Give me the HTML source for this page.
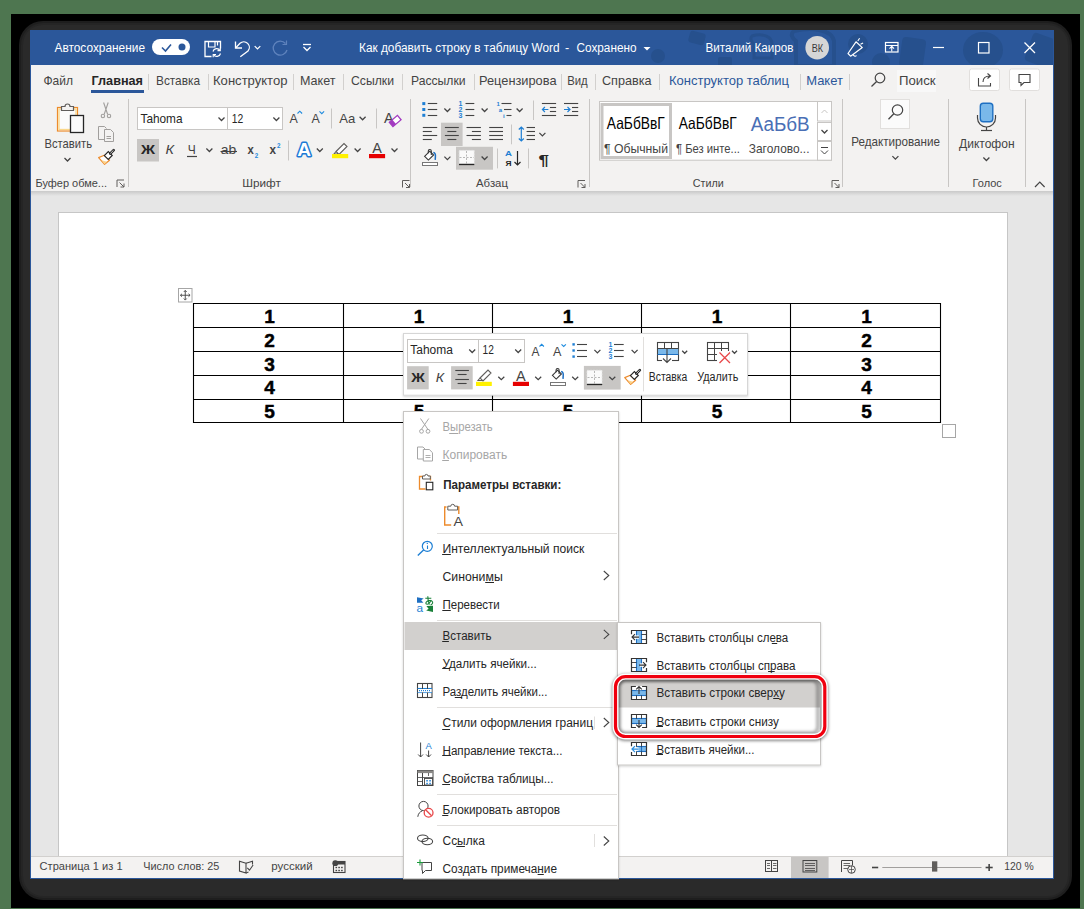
<!DOCTYPE html>
<html><head><meta charset="utf-8"><style>
html,body{margin:0;padding:0;width:1084px;height:909px;overflow:hidden;background:#4e7650}
svg{display:block;font-family:"Liberation Sans",sans-serif}
</style></head><body>
<svg width="1084" height="909" viewBox="0 0 1084 909">
<rect x="0" y="0" width="1084" height="909" fill="#4e7650" />
<rect x="11" y="14" width="1069" height="894" fill="#000" />
<rect x="19" y="21" width="1053" height="879" fill="#1e1e1e" rx="24" />
<rect x="21" y="23" width="1049" height="875" fill="#252525" rx="22" />
<rect x="23" y="25" width="1045" height="871" fill="#2a2a2a" rx="20" />
<rect x="30" y="30" width="1024" height="849" fill="#2b579a" />
<rect x="31" y="65" width="1022" height="813" fill="#f3f2f1" />
<defs><clipPath id="tbc"><rect x="31" y="30" width="1022" height="35"/></clipPath></defs><g clip-path="url(#tbc)"><g fill="#26508d">
<circle cx="658" cy="56" r="7"/>
<rect x="689" y="32" width="16" height="12" rx="3" transform="rotate(15 697 38)"/>
<rect x="718" y="57" width="14" height="12" rx="2"/>
<circle cx="858" cy="44" r="10"/>
<circle cx="881" cy="62" r="9"/>
<rect x="901" y="38" width="24" height="30" rx="4" transform="rotate(8 913 50)"/>
<ellipse cx="983" cy="50" rx="20" ry="18"/>
<rect x="1028" y="36" width="30" height="30" rx="4" transform="rotate(20 1043 51)"/>
</g>
<path d="M752 36c10-3 20 0 20 8v14h-18v-14c-3-2-4-6-2-8z" fill="none" stroke="#26508d" stroke-width="3"/>
<path d="M794 31c16-4 38-2 40 10v25h-38v-25c-4-3-6-7-2-10z" fill="none" stroke="#26508d" stroke-width="4"/></g>
<text x="54.5" y="51.8" font-size="12.5" fill="#fff" textLength="90.5" lengthAdjust="spacingAndGlyphs" >Автосохранение</text>
<rect x="152" y="39" width="38" height="16" fill="#fff" rx="8" />
<path d="M162 47.5L165.5 51L171 44.5" fill="none" stroke="#2b579a" stroke-width="1.6" />
<circle cx="182" cy="47" r="3.5" fill="#2b579a"/>
<path d="M211.5 56.5h-6.5v-15h15.5v7" fill="none" stroke="#fff" stroke-width="1.3" />
<path d="M208.5 41.5v5.5h6.5v-5.5M217.5 41.5v4" fill="none" stroke="#fff" stroke-width="1.2" />
<path d="M213 51.5a3.8 3.8 0 0 1 7-1M220.5 53.5a3.8 3.8 0 0 1-7 1" fill="none" stroke="#fff" stroke-width="1.2" />
<path d="M220.3 47.8v2.8h-2.8M213.2 57.3v-2.8h2.8" fill="none" stroke="#fff" stroke-width="1.1" />
<path d="M235.5 41.5v6.5h6.5" fill="none" stroke="#fff" stroke-width="1.3" />
<path d="M235.8 47.7L240 43.2a5.6 5.6 0 0 1 8 7.8L240.3 56.8" fill="none" stroke="#fff" stroke-width="1.3" />
<path d="M254.7 46.1L257.5 48.9L260.3 46.1" fill="none" stroke="#fff" stroke-width="1.25" />
<path d="M285.5 43.5A7 7 0 1 0 287 50" fill="none" stroke="#5f83bd" stroke-width="1.3"/>
<path d="M286.5 40.5v4h-4" fill="none" stroke="#5f83bd" stroke-width="1.2" />
<line x1="303" y1="44.5" x2="311" y2="44.5" stroke="#fff" stroke-width="1.3" />
<path d="M303.5 47l3.5 3.5 3.5-3.5" fill="none" stroke="#fff" stroke-width="1.3" />
<text x="359" y="52" font-size="12.5" fill="#fff" textLength="200.5" lengthAdjust="spacingAndGlyphs" >Как добавить строку в таблицу Word</text>
<text x="565" y="52" font-size="12.5" fill="#fff" >-</text>
<text x="576.5" y="52" font-size="12.5" fill="#fff" textLength="60" lengthAdjust="spacingAndGlyphs" >Сохранено</text>
<path d="M643.5 47h7l-3.5 3.5z" fill="#fff" />
<text x="705.5" y="52" font-size="12.5" fill="#fff" textLength="88" lengthAdjust="spacingAndGlyphs" >Виталий Каиров</text>
<circle cx="817.2" cy="47.7" r="11.8" fill="#d6d6d6"/>
<text x="817.4" y="51.8" font-size="11" fill="#3a3a3a" textLength="11.4" lengthAdjust="spacingAndGlyphs" text-anchor="middle" >ВК</text>
<path d="M848 53.5L856 41.8L862.3 47.6L850.6 56.2Z" fill="none" stroke="#fff" stroke-width="1.2" stroke-linejoin="round"/>
<path d="M853.3 54.3a1.8 1.8 0 0 0 3.2 1.2" fill="none" stroke="#fff" stroke-width="1.1" />
<path d="M857.8 41l1.8-2.8M860.5 44.3l2.6-1.3" fill="none" stroke="#fff" stroke-width="1.1" />
<rect x="885.5" y="42.5" width="12.5" height="9.5" fill="none" stroke="#fff" stroke-width="1.2" />
<line x1="885.5" y1="45.5" x2="898" y2="45.5" stroke="#fff" stroke-width="1" />
<path d="M891.75 51.5v-5M889.5 48.7l2.25-2.3 2.25 2.3" fill="none" stroke="#fff" stroke-width="1.1" />
<line x1="933" y1="47.5" x2="944" y2="47.5" stroke="#fff" stroke-width="1.2" />
<rect x="978.5" y="42.5" width="10.5" height="10.5" fill="none" stroke="#fff" stroke-width="1.2" />
<path d="M1024.5 42.5l10.5 10.5M1035 42.5l-10.5 10.5" fill="none" stroke="#fff" stroke-width="1.3" />
<text x="43.5" y="85" font-size="12.8" fill="#444" textLength="29.5" lengthAdjust="spacingAndGlyphs" >Файл</text>
<text x="91.5" y="85" font-size="12.8" fill="#262626" font-weight="bold" textLength="51.5" lengthAdjust="spacingAndGlyphs" >Главная</text>
<text x="156" y="85" font-size="12.8" fill="#444" textLength="44" lengthAdjust="spacingAndGlyphs" >Вставка</text>
<text x="213" y="85" font-size="12.8" fill="#444" textLength="74.5" lengthAdjust="spacingAndGlyphs" >Конструктор</text>
<text x="300" y="85" font-size="12.8" fill="#444" textLength="35.5" lengthAdjust="spacingAndGlyphs" >Макет</text>
<text x="351" y="85" font-size="12.8" fill="#444" textLength="43" lengthAdjust="spacingAndGlyphs" >Ссылки</text>
<text x="411" y="85" font-size="12.8" fill="#444" textLength="54.5" lengthAdjust="spacingAndGlyphs" >Рассылки</text>
<text x="479" y="85" font-size="12.8" fill="#444" textLength="77.5" lengthAdjust="spacingAndGlyphs" >Рецензирова</text>
<text x="567.2" y="85" font-size="12.8" fill="#444" textLength="20.5" lengthAdjust="spacingAndGlyphs" >Вид</text>
<text x="602" y="85" font-size="12.8" fill="#444" textLength="49.5" lengthAdjust="spacingAndGlyphs" >Справка</text>
<text x="669" y="85" font-size="12.8" fill="#2b579a" textLength="120" lengthAdjust="spacingAndGlyphs" >Конструктор таблиц</text>
<text x="806.2" y="85" font-size="12.8" fill="#2b579a" textLength="36.7" lengthAdjust="spacingAndGlyphs" >Макет</text>
<line x1="148.5" y1="74" x2="148.5" y2="90" stroke="#d2d0ce" stroke-width="1" />
<line x1="208.5" y1="74" x2="208.5" y2="90" stroke="#d2d0ce" stroke-width="1" />
<line x1="293.5" y1="74" x2="293.5" y2="90" stroke="#d2d0ce" stroke-width="1" />
<line x1="343.5" y1="74" x2="343.5" y2="90" stroke="#d2d0ce" stroke-width="1" />
<line x1="402.5" y1="74" x2="402.5" y2="90" stroke="#d2d0ce" stroke-width="1" />
<line x1="474.5" y1="74" x2="474.5" y2="90" stroke="#d2d0ce" stroke-width="1" />
<line x1="561.5" y1="74" x2="561.5" y2="90" stroke="#d2d0ce" stroke-width="1" />
<line x1="595.5" y1="74" x2="595.5" y2="90" stroke="#d2d0ce" stroke-width="1" />
<line x1="659.5" y1="74" x2="659.5" y2="90" stroke="#d2d0ce" stroke-width="1" />
<line x1="800.5" y1="74" x2="800.5" y2="90" stroke="#d2d0ce" stroke-width="1" />
<line x1="849.5" y1="74" x2="849.5" y2="90" stroke="#d2d0ce" stroke-width="1" />
<rect x="91" y="90" width="53" height="3" fill="#2b579a" />
<circle cx="880" cy="78" r="4.8" fill="none" stroke="#444" stroke-width="1.2"/>
<line x1="876.6" y1="81.5" x2="871.5" y2="86.5" stroke="#444" stroke-width="1.3" />
<rect x="897" y="70" width="39" height="22" fill="#f8f8f8" />
<text x="899" y="85" font-size="12.8" fill="#444" textLength="36.5" lengthAdjust="spacingAndGlyphs" >Поиск</text>
<rect x="969.5" y="69" width="30" height="21.5" fill="#fff" stroke="#e1dfdd" stroke-width="1" rx="2" />
<rect x="1009.5" y="69" width="30" height="21.5" fill="#fff" stroke="#e1dfdd" stroke-width="1" rx="2" />
<path d="M978.5 78v8h12v-3M983 82c0-4 3-6 7-6M987.5 73.5l3 2.5-3 2.5" fill="none" stroke="#444" stroke-width="1.1" />
<path d="M1019 74.5h11v8h-6l-3 3v-3h-2z" fill="none" stroke="#444" stroke-width="1.1" />
<rect x="31" y="191" width="1022" height="666" fill="#e6e6e6" />
<defs><linearGradient id="sh" x1="0" y1="0" x2="0" y2="1"><stop offset="0" stop-color="#c9c9c9"/><stop offset="1" stop-color="#e6e6e6"/></linearGradient></defs>
<rect x="31" y="191" width="1022" height="5" fill="url(#sh)" />
<rect x="58.5" y="212.5" width="949" height="660" fill="#fff" stroke="#c6c6c6" stroke-width="1" />
<rect x="31" y="856.5" width="1022" height="21.5" fill="#f3f2f1" />
<line x1="31" y1="856.5" x2="1053" y2="856.5" stroke="#d2d0ce" stroke-width="1" />
<rect x="57.5" y="107.5" width="20" height="23.5" fill="#fbfbfb" stroke="#ed8b2c" stroke-width="1.2" />
<rect x="59" y="109" width="17" height="20.5" fill="none" stroke="#fad78a" stroke-width="1.3" />
<path d="M61.5 110.5v-4h3.5a2.5 2.5 0 0 1 5 0h3.5v4z" fill="#f3f2f1" stroke="#605e5c" stroke-width="1.2" />
<rect x="70.5" y="115.5" width="13" height="17" fill="#fbfbfb" stroke="#262626" stroke-width="1.3" />
<text x="44.5" y="147.8" font-size="12.8" fill="#444" textLength="47.5" lengthAdjust="spacingAndGlyphs" >Вставить</text>
<path d="M64.5 158.0L67.5 161.0L70.5 158.0" fill="none" stroke="#444" stroke-width="1.25" />
<path d="M103.6 102.5L107.6 114.3M108.2 102.5L104.2 114.3" fill="none" stroke="#a19f9d" stroke-width="1.1" />
<circle cx="102.9" cy="116" r="1.7" fill="none" stroke="#a19f9d" stroke-width="1.1"/>
<circle cx="109" cy="116" r="1.7" fill="none" stroke="#a19f9d" stroke-width="1.1"/>
<path d="M105.5 139.5h-7v-13h6l2 2" fill="none" stroke="#a19f9d" stroke-width="1" />
<path d="M104.5 129.5h6l3 3v9h-9z" fill="#f3f2f1" stroke="#a19f9d" stroke-width="1" />
<line x1="106.5" y1="136.5" x2="111" y2="136.5" stroke="#a19f9d" stroke-width="1" />
<line x1="106.5" y1="138.5" x2="111" y2="138.5" stroke="#a19f9d" stroke-width="1" />
<path d="M98.6 157.6L104.3 155.3L109.5 160.3L104.6 164.3Z" fill="#fff" stroke="#ed8b2c" stroke-width="1.2" stroke-linejoin="round"/>
<path d="M101.5 160.3L107 161.8L104.6 164.3Z" fill="#fbd38c" />
<path d="M104.3 155.6L108.3 151.6L112.2 155.5L108.3 159.5Z" fill="#fff" stroke="#262626" stroke-width="1.2" />
<path d="M110.2 153.6L113.7 150.1" fill="none" stroke="#262626" stroke-width="2.6" stroke-linecap="round"/>
<path d="M110.4 153.4L113.5 150.3" fill="none" stroke="#fff" stroke-width="0.8" />
<text x="35.5" y="186.7" font-size="11.8" fill="#444" textLength="71.5" lengthAdjust="spacingAndGlyphs" >Буфер обме...</text>
<path d="M117 187v-7h7" fill="none" stroke="#605e5c" stroke-width="1" />
<path d="M119.5 182.5l4.5 4.5M124 183.5v3.5h-3.5" fill="none" stroke="#605e5c" stroke-width="1" />
<line x1="128.5" y1="99" x2="128.5" y2="187" stroke="#c8c6c4" stroke-width="1" />
<rect x="137.5" y="107.5" width="90" height="22" fill="#fff" stroke="#c8c6c4" stroke-width="1" />
<rect x="227.5" y="107.5" width="55" height="22" fill="#fff" stroke="#c8c6c4" stroke-width="1" />
<text x="140.5" y="123" font-size="12.8" fill="#262626" textLength="42" lengthAdjust="spacingAndGlyphs" >Tahoma</text>
<text x="231.8" y="123" font-size="12.8" fill="#262626" textLength="11.5" lengthAdjust="spacingAndGlyphs" >12</text>
<path d="M218.5 117.5L221.5 120.5L224.5 117.5" fill="none" stroke="#444" stroke-width="1.25" />
<path d="M273.4 117.5L276.4 120.5L279.4 117.5" fill="none" stroke="#444" stroke-width="1.25" />
<text x="289.4" y="122.8" font-size="13" fill="#444" textLength="8.3" lengthAdjust="spacingAndGlyphs" >A</text>
<path d="M297.5 113.5l2.3-2.3 2.3 2.3" fill="none" stroke="#1e8bde" stroke-width="1.1" />
<text x="311.4" y="122.8" font-size="13" fill="#444" textLength="8.3" lengthAdjust="spacingAndGlyphs" >A</text>
<path d="M319.5 111.3l2.3 2.3 2.3-2.3" fill="none" stroke="#1e8bde" stroke-width="1.1" />
<line x1="331.5" y1="108.5" x2="331.5" y2="128.5" stroke="#c8c6c4" stroke-width="1" />
<text x="339.3" y="122.8" font-size="13" fill="#444" textLength="16" lengthAdjust="spacingAndGlyphs" >Aa</text>
<path d="M359.6 116.8L362.6 119.8L365.6 116.8" fill="none" stroke="#444" stroke-width="1.25" />
<line x1="376.5" y1="108.5" x2="376.5" y2="128.5" stroke="#c8c6c4" stroke-width="1" />
<text x="384" y="122.8" font-size="14.5" fill="#444" textLength="9.5" lengthAdjust="spacingAndGlyphs" >A</text>
<g transform="translate(395.2 121) rotate(-40)"><rect x="-5.3" y="-2.8" width="10.6" height="5.6" fill="#fff" stroke="#a33bc1" stroke-width="1.3"/><rect x="-5.3" y="-2.8" width="4" height="5.6" fill="#a33bc1"/></g>
<rect x="137" y="139" width="22" height="22.5" fill="#c8c6c4" />
<text x="141" y="154" font-size="13.5" fill="#262626" font-weight="bold" textLength="14" lengthAdjust="spacingAndGlyphs" >Ж</text>
<text x="165.5" y="154" font-size="13.5" fill="#444" textLength="8.5" lengthAdjust="spacingAndGlyphs" font-style="italic">К</text>
<text x="187.8" y="154" font-size="13.5" fill="#444" textLength="8" lengthAdjust="spacingAndGlyphs" >Ч</text>
<line x1="187" y1="156.5" x2="197" y2="156.5" stroke="#444" stroke-width="1.2" />
<path d="M206.4 148.5L209.4 151.5L212.4 148.5" fill="none" stroke="#444" stroke-width="1.25" />
<text x="220.8" y="154" font-size="13.5" fill="#444" textLength="15.5" lengthAdjust="spacingAndGlyphs" >ab</text>
<line x1="220.5" y1="151.5" x2="237" y2="151.5" stroke="#444" stroke-width="1.1" />
<text x="247.6" y="154" font-size="13.5" fill="#444" font-weight="bold" textLength="6.3" lengthAdjust="spacingAndGlyphs" >x</text>
<text x="254.7" y="158" font-size="7.5" fill="#1e8bde" font-weight="bold" textLength="3.5" lengthAdjust="spacingAndGlyphs" >2</text>
<text x="269.5" y="154" font-size="13.5" fill="#444" font-weight="bold" textLength="6.5" lengthAdjust="spacingAndGlyphs" >x</text>
<text x="276.9" y="147.5" font-size="7.5" fill="#1e8bde" font-weight="bold" textLength="3.5" lengthAdjust="spacingAndGlyphs" >2</text>
<line x1="288.5" y1="140.5" x2="288.5" y2="160.5" stroke="#c8c6c4" stroke-width="1" />
<text x="297.2" y="156" font-size="17.5" fill="#fff" font-weight="bold" textLength="13.8" lengthAdjust="spacingAndGlyphs" stroke="#1e7ad6" stroke-width="2.8" paint-order="stroke" stroke-linejoin="round">A</text>
<path d="M316.8 148.5L319.8 151.5L322.8 148.5" fill="none" stroke="#444" stroke-width="1.25" />
<path d="M336 151.5l8-8 3 3-8 8zM336 151.5l-2 2.5h4" fill="#fff" stroke="#605e5c" stroke-width="1.1" />
<rect x="332" y="154" width="16.2" height="4.2" fill="#fff100" />
<path d="M354.6 148.5L357.6 151.5L360.6 148.5" fill="none" stroke="#444" stroke-width="1.25" />
<text x="372.3" y="152.8" font-size="14.5" fill="#444" textLength="9.6" lengthAdjust="spacingAndGlyphs" >A</text>
<rect x="369" y="154" width="16.1" height="4.2" fill="#e60000" />
<path d="M391.5 148.5L394.5 151.5L397.5 148.5" fill="none" stroke="#444" stroke-width="1.25" />
<text x="242.2" y="186.7" font-size="11.8" fill="#444" textLength="38.6" lengthAdjust="spacingAndGlyphs" >Шрифт</text>
<path d="M402.5 187.5v-7h7" fill="none" stroke="#605e5c" stroke-width="1" />
<path d="M405.0 183.0l4.5 4.5M409.5 184.0v3.5h-3.5" fill="none" stroke="#605e5c" stroke-width="1" />
<line x1="410.5" y1="99" x2="410.5" y2="187" stroke="#c8c6c4" stroke-width="1" />
<rect x="422.3" y="102.1" width="3" height="3" fill="#1e7fd4" />
<line x1="427.8" y1="103.5" x2="437.2" y2="103.5" stroke="#444" stroke-width="1.1" />
<rect x="422.3" y="108.0" width="3" height="3" fill="#1e7fd4" />
<line x1="427.8" y1="109.5" x2="437.2" y2="109.5" stroke="#444" stroke-width="1.1" />
<rect x="422.3" y="113.8" width="3" height="3" fill="#1e7fd4" />
<line x1="427.8" y1="115.5" x2="437.2" y2="115.5" stroke="#444" stroke-width="1.1" />
<path d="M444.4 108.5L447.4 111.5L450.4 108.5" fill="none" stroke="#444" stroke-width="1.25" />
<text x="458.6" y="106.19999999999999" font-size="7" fill="#1e7fd4" font-weight="bold" >1</text>
<line x1="465.5" y1="103.5" x2="474.3" y2="103.5" stroke="#444" stroke-width="1.1" />
<text x="458.6" y="112.1" font-size="7" fill="#1e7fd4" font-weight="bold" >2</text>
<line x1="465.5" y1="109.5" x2="474.3" y2="109.5" stroke="#444" stroke-width="1.1" />
<text x="458.6" y="117.89999999999999" font-size="7" fill="#1e7fd4" font-weight="bold" >3</text>
<line x1="465.5" y1="115.5" x2="474.3" y2="115.5" stroke="#444" stroke-width="1.1" />
<path d="M481.6 108.5L484.6 111.5L487.6 108.5" fill="none" stroke="#444" stroke-width="1.25" />
<text x="496.5" y="105.8" font-size="6" fill="#1e7fd4" font-weight="bold" >1</text>
<line x1="501.5" y1="103.5" x2="511.5" y2="103.5" stroke="#444" stroke-width="1.1" />
<text x="498.8" y="111.7" font-size="6" fill="#1e7fd4" font-weight="bold" >a</text>
<line x1="504" y1="109.5" x2="511.5" y2="109.5" stroke="#444" stroke-width="1.1" />
<text x="503" y="117.5" font-size="6" fill="#1e7fd4" font-weight="bold" >i</text>
<line x1="506.5" y1="115.5" x2="511.5" y2="115.5" stroke="#444" stroke-width="1.1" />
<path d="M516.6 108.5L519.6 111.5L522.6 108.5" fill="none" stroke="#444" stroke-width="1.25" />
<line x1="533.5" y1="100.5" x2="533.5" y2="120" stroke="#c8c6c4" stroke-width="1" />
<line x1="541.9" y1="103.5" x2="556.1" y2="103.5" stroke="#444" stroke-width="1.1" />
<line x1="541.9" y1="115.5" x2="556.1" y2="115.5" stroke="#444" stroke-width="1.1" />
<line x1="549.9" y1="107.5" x2="556.1" y2="107.5" stroke="#444" stroke-width="1.1" />
<line x1="549.9" y1="111.5" x2="556.1" y2="111.5" stroke="#444" stroke-width="1.1" />
<path d="M548.4 109.5h-6M544.9 107l-2.5 2.5 2.5 2.5" fill="none" stroke="#1e7fd4" stroke-width="1.2" />
<line x1="564" y1="103.5" x2="578.2" y2="103.5" stroke="#444" stroke-width="1.1" />
<line x1="564" y1="115.5" x2="578.2" y2="115.5" stroke="#444" stroke-width="1.1" />
<line x1="572" y1="107.5" x2="578.2" y2="107.5" stroke="#444" stroke-width="1.1" />
<line x1="572" y1="111.5" x2="578.2" y2="111.5" stroke="#444" stroke-width="1.1" />
<path d="M564 109.5h6M567.5 107l2.5 2.5-2.5 2.5" fill="none" stroke="#1e7fd4" stroke-width="1.2" />
<rect x="441" y="122.7" width="21.6" height="23.3" fill="#c8c6c4" />
<line x1="422.8" y1="127.5" x2="437.2" y2="127.5" stroke="#444" stroke-width="1.1" />
<line x1="444.90000000000003" y1="127.5" x2="458.8" y2="127.5" stroke="#444" stroke-width="1.1" />
<line x1="466.5" y1="127.5" x2="480.9" y2="127.5" stroke="#444" stroke-width="1.1" />
<line x1="489.2" y1="127.5" x2="503" y2="127.5" stroke="#444" stroke-width="1.1" />
<line x1="422.8" y1="131.5" x2="431.8" y2="131.5" stroke="#444" stroke-width="1.1" />
<line x1="447.35" y1="131.5" x2="456.35" y2="131.5" stroke="#444" stroke-width="1.1" />
<line x1="471.9" y1="131.5" x2="480.9" y2="131.5" stroke="#444" stroke-width="1.1" />
<line x1="489.2" y1="131.5" x2="503" y2="131.5" stroke="#444" stroke-width="1.1" />
<line x1="422.8" y1="135.5" x2="437.2" y2="135.5" stroke="#444" stroke-width="1.1" />
<line x1="444.90000000000003" y1="135.5" x2="458.8" y2="135.5" stroke="#444" stroke-width="1.1" />
<line x1="466.5" y1="135.5" x2="480.9" y2="135.5" stroke="#444" stroke-width="1.1" />
<line x1="489.2" y1="135.5" x2="503" y2="135.5" stroke="#444" stroke-width="1.1" />
<line x1="422.8" y1="139.5" x2="431.8" y2="139.5" stroke="#444" stroke-width="1.1" />
<line x1="447.35" y1="139.5" x2="456.35" y2="139.5" stroke="#444" stroke-width="1.1" />
<line x1="471.9" y1="139.5" x2="480.9" y2="139.5" stroke="#444" stroke-width="1.1" />
<line x1="489.2" y1="139.5" x2="503" y2="139.5" stroke="#444" stroke-width="1.1" />
<line x1="511.5" y1="124.5" x2="511.5" y2="144.3" stroke="#c8c6c4" stroke-width="1" />
<path d="M521.3 127v14M518.8 129.5l2.5-2.5 2.5 2.5M518.8 138.5l2.5 2.5 2.5-2.5" fill="none" stroke="#1e7fd4" stroke-width="1.2" />
<line x1="526.6" y1="127.5" x2="535" y2="127.5" stroke="#444" stroke-width="1.1" />
<line x1="526.6" y1="131.5" x2="535" y2="131.5" stroke="#444" stroke-width="1.1" />
<line x1="526.6" y1="135.5" x2="535" y2="135.5" stroke="#444" stroke-width="1.1" />
<line x1="526.6" y1="139.5" x2="535" y2="139.5" stroke="#444" stroke-width="1.1" />
<path d="M539.4 132.9L542.4 135.9L545.4 132.9" fill="none" stroke="#444" stroke-width="1.25" />
<path d="M424.6 156.3L429.8 151.2L433.6 155L428.4 160.1Z" fill="#fff" stroke="#333" stroke-width="1.1" />
<path d="M428.3 153.3V151a1.5 1.5 0 0 1 3 0V155" fill="none" stroke="#333" stroke-width="1.1" />
<path d="M433.3 152.4c1.5 0.3 2.4 2 2.1 4.5l-0.2 3" fill="none" stroke="#1e6fc2" stroke-width="1.5" />
<rect x="422.5" y="162.5" width="15" height="3" fill="#fff" stroke="#777" stroke-width="1" />
<path d="M444.4 156.6L447.4 159.6L450.4 156.6" fill="none" stroke="#444" stroke-width="1.25" />
<rect x="456" y="146.8" width="37" height="22.9" fill="#c8c6c4" />
<rect x="459.2" y="150.4" width="15" height="13.2" fill="#fafafa" stroke="#e6e6e6" stroke-width="0.8" stroke-dasharray="2 1"/>
<line x1="466.5" y1="151" x2="466.5" y2="163.5" stroke="#b8b8b8" stroke-width="1" stroke-dasharray="2 1.5"/>
<line x1="459.5" y1="157.5" x2="474" y2="157.5" stroke="#b8b8b8" stroke-width="1" stroke-dasharray="2 1.5"/>
<line x1="459" y1="164.5" x2="474.3" y2="164.5" stroke="#262626" stroke-width="1.3" />
<path d="M481.6 156.5L484.6 159.5L487.6 156.5" fill="none" stroke="#444" stroke-width="1.25" />
<line x1="497.5" y1="148.5" x2="497.5" y2="168.4" stroke="#c8c6c4" stroke-width="1" />
<text x="505" y="156.3" font-size="7.8" fill="#1e7fd4" font-weight="bold" textLength="7" lengthAdjust="spacingAndGlyphs" >A</text>
<text x="505.5" y="165.5" font-size="7.8" fill="#262626" font-weight="bold" textLength="6" lengthAdjust="spacingAndGlyphs" >Я</text>
<path d="M517.5 151v14M514.5 162l3 3 3-3" fill="none" stroke="#262626" stroke-width="1.2" />
<line x1="528.5" y1="148.5" x2="528.5" y2="168.4" stroke="#c8c6c4" stroke-width="1" />
<text x="538.5" y="164.5" font-size="15" fill="#262626" font-weight="bold" textLength="10.5" lengthAdjust="spacingAndGlyphs" >¶</text>
<text x="476" y="186.7" font-size="11.8" fill="#444" textLength="32" lengthAdjust="spacingAndGlyphs" >Абзац</text>
<path d="M578 187.5v-7h7" fill="none" stroke="#605e5c" stroke-width="1" />
<path d="M580.5 183.0l4.5 4.5M585 184.0v3.5h-3.5" fill="none" stroke="#605e5c" stroke-width="1" />
<line x1="589.5" y1="99" x2="589.5" y2="187" stroke="#c8c6c4" stroke-width="1" />
<rect x="599.5" y="101.5" width="232" height="58.7" fill="#fff" stroke="#c8c6c4" stroke-width="1" />
<rect x="602" y="104.5" width="68.5" height="53" fill="none" stroke="#c8c6c4" stroke-width="3" />
<text x="606.8" y="128.6" font-size="16.5" fill="#000" textLength="58" lengthAdjust="spacingAndGlyphs" >АаБбВвГ</text>
<text x="604" y="152.6" font-size="12.2" fill="#444" textLength="64" lengthAdjust="spacingAndGlyphs" >¶ Обычный</text>
<text x="678.7" y="128.6" font-size="16.5" fill="#000" textLength="58" lengthAdjust="spacingAndGlyphs" >АаБбВвГ</text>
<text x="676" y="152.6" font-size="12.2" fill="#444" textLength="64" lengthAdjust="spacingAndGlyphs" >¶ Без инте...</text>
<text x="750.7" y="130.5" font-size="19.5" fill="#4a6fb5" textLength="59" lengthAdjust="spacingAndGlyphs" >АаБбВ</text>
<text x="748.8" y="152.6" font-size="12.2" fill="#444" textLength="60.7" lengthAdjust="spacingAndGlyphs" >Заголово...</text>
<rect x="809.5" y="106" width="8" height="27" fill="#fff" />
<rect x="817.5" y="101.5" width="14" height="19.5" fill="#fff" stroke="#c8c6c4" stroke-width="1" />
<rect x="817.5" y="122.5" width="14" height="18" fill="#fff" stroke="#c8c6c4" stroke-width="1" />
<rect x="817.5" y="141.5" width="14" height="18.7" fill="#fff" stroke="#c8c6c4" stroke-width="1" />
<path d="M821.5 113l3-3 3 3" fill="none" stroke="#c8c6c4" stroke-width="1" />
<path d="M821.5 130.0L824.5 133.0L827.5 130.0" fill="none" stroke="#444" stroke-width="1.25" />
<line x1="821" y1="147.5" x2="828" y2="147.5" stroke="#444" stroke-width="1" />
<path d="M821 150.5l3.5 3.5 3.5-3.5" fill="none" stroke="#444" stroke-width="1" />
<text x="692.7" y="186.7" font-size="11.8" fill="#444" textLength="31" lengthAdjust="spacingAndGlyphs" >Стили</text>
<path d="M832 187.5v-7h7" fill="none" stroke="#605e5c" stroke-width="1" />
<path d="M834.5 183.0l4.5 4.5M839 184.0v3.5h-3.5" fill="none" stroke="#605e5c" stroke-width="1" />
<line x1="842.5" y1="99" x2="842.5" y2="187" stroke="#c8c6c4" stroke-width="1" />
<rect x="880.5" y="99.5" width="29" height="29" fill="#fbfbfb" stroke="#e1dfdd" stroke-width="1" />
<circle cx="897.5" cy="110" r="5.2" fill="none" stroke="#444" stroke-width="1.2"/>
<line x1="893.8" y1="113.8" x2="888.5" y2="119.2" stroke="#444" stroke-width="1.3" />
<text x="851.2" y="146" font-size="12.8" fill="#444" textLength="88.7" lengthAdjust="spacingAndGlyphs" >Редактирование</text>
<path d="M892.4 156.1L895.4 159.1L898.4 156.1" fill="none" stroke="#444" stroke-width="1.25" />
<line x1="948.5" y1="99" x2="948.5" y2="187" stroke="#c8c6c4" stroke-width="1" />
<rect x="980.3" y="103.3" width="12.5" height="18.5" fill="#7ab8ea" stroke="#1e6fc2" stroke-width="1.4" rx="3" />
<path d="M977.5 115v3a9 9 0 0 0 18 0v-3" fill="none" stroke="#444" stroke-width="1.2" />
<line x1="986.5" y1="127" x2="986.5" y2="130" stroke="#444" stroke-width="1.2" />
<line x1="981" y1="130.5" x2="992" y2="130.5" stroke="#444" stroke-width="1.2" />
<text x="959" y="148" font-size="12.8" fill="#444" textLength="55.6" lengthAdjust="spacingAndGlyphs" >Диктофон</text>
<path d="M983.4 157.5L986.4 160.5L989.4 157.5" fill="none" stroke="#444" stroke-width="1.25" />
<text x="972.6" y="186.7" font-size="11.8" fill="#444" textLength="29.3" lengthAdjust="spacingAndGlyphs" >Голос</text>
<line x1="1025.5" y1="99" x2="1025.5" y2="187" stroke="#c8c6c4" stroke-width="1" />
<path d="M1035 187l4.8-4.8 4.8 4.8" fill="none" stroke="#444" stroke-width="1.2" />
<line x1="193.5" y1="303" x2="193.5" y2="423" stroke="#000" stroke-width="1.1" />
<line x1="343.5" y1="303" x2="343.5" y2="423" stroke="#000" stroke-width="1.1" />
<line x1="492.5" y1="303" x2="492.5" y2="423" stroke="#000" stroke-width="1.1" />
<line x1="641.5" y1="303" x2="641.5" y2="423" stroke="#000" stroke-width="1.1" />
<line x1="790.5" y1="303" x2="790.5" y2="423" stroke="#000" stroke-width="1.1" />
<line x1="940.5" y1="303" x2="940.5" y2="423" stroke="#000" stroke-width="1.1" />
<line x1="193" y1="303.5" x2="941" y2="303.5" stroke="#000" stroke-width="1.1" />
<line x1="193" y1="327.5" x2="941" y2="327.5" stroke="#000" stroke-width="1.1" />
<line x1="193" y1="351.5" x2="941" y2="351.5" stroke="#000" stroke-width="1.1" />
<line x1="193" y1="375.5" x2="941" y2="375.5" stroke="#000" stroke-width="1.1" />
<line x1="193" y1="399.5" x2="941" y2="399.5" stroke="#000" stroke-width="1.1" />
<line x1="193" y1="422.5" x2="941" y2="422.5" stroke="#000" stroke-width="1.1" />
<text x="264.2" y="323.0" font-size="18.5" fill="#000" font-weight="bold" textLength="10.6" lengthAdjust="spacingAndGlyphs" stroke="#000" stroke-width="0.45">1</text>
<text x="413.7" y="323.0" font-size="18.5" fill="#000" font-weight="bold" textLength="10.6" lengthAdjust="spacingAndGlyphs" stroke="#000" stroke-width="0.45">1</text>
<text x="562.7" y="323.0" font-size="18.5" fill="#000" font-weight="bold" textLength="10.6" lengthAdjust="spacingAndGlyphs" stroke="#000" stroke-width="0.45">1</text>
<text x="711.7" y="323.0" font-size="18.5" fill="#000" font-weight="bold" textLength="10.6" lengthAdjust="spacingAndGlyphs" stroke="#000" stroke-width="0.45">1</text>
<text x="861.2" y="323.0" font-size="18.5" fill="#000" font-weight="bold" textLength="10.6" lengthAdjust="spacingAndGlyphs" stroke="#000" stroke-width="0.45">1</text>
<text x="264.2" y="346.8" font-size="18.5" fill="#000" font-weight="bold" textLength="10.6" lengthAdjust="spacingAndGlyphs" stroke="#000" stroke-width="0.45">2</text>
<text x="413.7" y="346.8" font-size="18.5" fill="#000" font-weight="bold" textLength="10.6" lengthAdjust="spacingAndGlyphs" stroke="#000" stroke-width="0.45">2</text>
<text x="562.7" y="346.8" font-size="18.5" fill="#000" font-weight="bold" textLength="10.6" lengthAdjust="spacingAndGlyphs" stroke="#000" stroke-width="0.45">2</text>
<text x="711.7" y="346.8" font-size="18.5" fill="#000" font-weight="bold" textLength="10.6" lengthAdjust="spacingAndGlyphs" stroke="#000" stroke-width="0.45">2</text>
<text x="861.2" y="346.8" font-size="18.5" fill="#000" font-weight="bold" textLength="10.6" lengthAdjust="spacingAndGlyphs" stroke="#000" stroke-width="0.45">2</text>
<text x="264.2" y="370.6" font-size="18.5" fill="#000" font-weight="bold" textLength="10.6" lengthAdjust="spacingAndGlyphs" stroke="#000" stroke-width="0.45">3</text>
<text x="413.7" y="370.6" font-size="18.5" fill="#000" font-weight="bold" textLength="10.6" lengthAdjust="spacingAndGlyphs" stroke="#000" stroke-width="0.45">3</text>
<text x="562.7" y="370.6" font-size="18.5" fill="#000" font-weight="bold" textLength="10.6" lengthAdjust="spacingAndGlyphs" stroke="#000" stroke-width="0.45">3</text>
<text x="711.7" y="370.6" font-size="18.5" fill="#000" font-weight="bold" textLength="10.6" lengthAdjust="spacingAndGlyphs" stroke="#000" stroke-width="0.45">3</text>
<text x="861.2" y="370.6" font-size="18.5" fill="#000" font-weight="bold" textLength="10.6" lengthAdjust="spacingAndGlyphs" stroke="#000" stroke-width="0.45">3</text>
<text x="264.2" y="394.4" font-size="18.5" fill="#000" font-weight="bold" textLength="10.6" lengthAdjust="spacingAndGlyphs" stroke="#000" stroke-width="0.45">4</text>
<text x="413.7" y="394.4" font-size="18.5" fill="#000" font-weight="bold" textLength="10.6" lengthAdjust="spacingAndGlyphs" stroke="#000" stroke-width="0.45">4</text>
<text x="562.7" y="394.4" font-size="18.5" fill="#000" font-weight="bold" textLength="10.6" lengthAdjust="spacingAndGlyphs" stroke="#000" stroke-width="0.45">4</text>
<text x="711.7" y="394.4" font-size="18.5" fill="#000" font-weight="bold" textLength="10.6" lengthAdjust="spacingAndGlyphs" stroke="#000" stroke-width="0.45">4</text>
<text x="861.2" y="394.4" font-size="18.5" fill="#000" font-weight="bold" textLength="10.6" lengthAdjust="spacingAndGlyphs" stroke="#000" stroke-width="0.45">4</text>
<text x="264.2" y="418.2" font-size="18.5" fill="#000" font-weight="bold" textLength="10.6" lengthAdjust="spacingAndGlyphs" stroke="#000" stroke-width="0.45">5</text>
<text x="413.7" y="418.2" font-size="18.5" fill="#000" font-weight="bold" textLength="10.6" lengthAdjust="spacingAndGlyphs" stroke="#000" stroke-width="0.45">5</text>
<text x="562.7" y="418.2" font-size="18.5" fill="#000" font-weight="bold" textLength="10.6" lengthAdjust="spacingAndGlyphs" stroke="#000" stroke-width="0.45">5</text>
<text x="711.7" y="418.2" font-size="18.5" fill="#000" font-weight="bold" textLength="10.6" lengthAdjust="spacingAndGlyphs" stroke="#000" stroke-width="0.45">5</text>
<text x="861.2" y="418.2" font-size="18.5" fill="#000" font-weight="bold" textLength="10.6" lengthAdjust="spacingAndGlyphs" stroke="#000" stroke-width="0.45">5</text>
<rect x="178.5" y="288.5" width="13.5" height="13.5" fill="#fff" stroke="#a6a6a6" stroke-width="1" />
<path d="M185.25 290.5v9M180.5 295.25h9.5" fill="none" stroke="#444" stroke-width="0.9" />
<path d="M183.8 292l1.45-1.6 1.45 1.6M183.8 298.5l1.45 1.6 1.45-1.6M182 293.8l-1.6 1.45 1.6 1.45M188.5 293.8l1.6 1.45-1.6 1.45" fill="none" stroke="#444" stroke-width="0.9" />
<rect x="942.5" y="424.5" width="13" height="13" fill="#fff" stroke="#a6a6a6" stroke-width="1" />
<defs><filter id="ds" x="-10%" y="-10%" width="120%" height="130%"><feDropShadow dx="0" dy="1" stdDeviation="1.2" flood-color="#000" flood-opacity="0.18"/></filter></defs>
<rect x="403.5" y="333.5" width="344" height="61.7" fill="#fff" stroke="#d6d6d6" stroke-width="1" filter="url(#ds)"/>
<rect x="407.5" y="339.5" width="71" height="23" fill="#fff" stroke="#c8c6c4" stroke-width="1" />
<rect x="478.5" y="339.5" width="46" height="23" fill="#fff" stroke="#c8c6c4" stroke-width="1" />
<text x="410.3" y="353.7" font-size="12.3" fill="#262626" textLength="42.5" lengthAdjust="spacingAndGlyphs" >Tahoma</text>
<text x="482.5" y="353.7" font-size="12.3" fill="#262626" textLength="11.3" lengthAdjust="spacingAndGlyphs" >12</text>
<path d="M469.2 349.5L472.2 352.5L475.2 349.5" fill="none" stroke="#444" stroke-width="1.25" />
<path d="M515.2 349.5L518.2 352.5L521.2 349.5" fill="none" stroke="#444" stroke-width="1.25" />
<text x="531.5" y="355.7" font-size="12.5" fill="#444" textLength="8" lengthAdjust="spacingAndGlyphs" >A</text>
<path d="M539.5 346.5l2.2-2.2 2.2 2.2" fill="none" stroke="#1e8bde" stroke-width="1.1" />
<text x="553" y="355.7" font-size="12.5" fill="#444" textLength="8.4" lengthAdjust="spacingAndGlyphs" >A</text>
<path d="M561.5 344.3l2.2 2.2 2.2-2.2" fill="none" stroke="#1e8bde" stroke-width="1.1" />
<rect x="572.4" y="343.2" width="2.4" height="2.4" fill="#1e7fd4" />
<line x1="577" y1="344.5" x2="587" y2="344.5" stroke="#444" stroke-width="1.1" />
<rect x="572.4" y="349.3" width="2.4" height="2.4" fill="#1e7fd4" />
<line x1="577" y1="350.5" x2="587" y2="350.5" stroke="#444" stroke-width="1.1" />
<rect x="572.4" y="355.40000000000003" width="2.4" height="2.4" fill="#1e7fd4" />
<line x1="577" y1="356.5" x2="587" y2="356.5" stroke="#444" stroke-width="1.1" />
<path d="M594.4 349.9L597.4 352.9L600.4 349.9" fill="none" stroke="#444" stroke-width="1.25" />
<text x="608.4" y="347.0" font-size="7" fill="#1e7fd4" font-weight="bold" >1</text>
<line x1="614" y1="344.5" x2="623.7" y2="344.5" stroke="#444" stroke-width="1.1" />
<text x="608.4" y="353.1" font-size="7" fill="#1e7fd4" font-weight="bold" >2</text>
<line x1="614" y1="350.5" x2="623.7" y2="350.5" stroke="#444" stroke-width="1.1" />
<text x="608.4" y="359.20000000000005" font-size="7" fill="#1e7fd4" font-weight="bold" >3</text>
<line x1="614" y1="356.5" x2="623.7" y2="356.5" stroke="#444" stroke-width="1.1" />
<path d="M631.6 349.9L634.6 352.9L637.6 349.9" fill="none" stroke="#444" stroke-width="1.25" />
<line x1="643.5" y1="337" x2="643.5" y2="391.4" stroke="#e1dfdd" stroke-width="1" />
<rect x="407.1" y="366.2" width="21.6" height="23.2" fill="#c8c6c4" />
<text x="411.3" y="382.3" font-size="13.5" fill="#262626" font-weight="bold" textLength="13.6" lengthAdjust="spacingAndGlyphs" >Ж</text>
<text x="435.7" y="382.3" font-size="13.5" fill="#444" textLength="8.3" lengthAdjust="spacingAndGlyphs" font-style="italic">К</text>
<rect x="451.1" y="366.2" width="21.6" height="23.2" fill="#c8c6c4" />
<line x1="455.3" y1="370.5" x2="468.90000000000003" y2="370.5" stroke="#444" stroke-width="1.1" />
<line x1="457.6" y1="374.5" x2="466.6" y2="374.5" stroke="#444" stroke-width="1.1" />
<line x1="455.3" y1="379.5" x2="468.90000000000003" y2="379.5" stroke="#444" stroke-width="1.1" />
<line x1="457.6" y1="383.5" x2="466.6" y2="383.5" stroke="#444" stroke-width="1.1" />
<path d="M480 378l8-8 3 3-8 8zM480 378l-2 2.5h4" fill="#fff" stroke="#605e5c" stroke-width="1.1" />
<rect x="476" y="381.8" width="15.8" height="4.2" fill="#fff100" />
<path d="M498.3 376.7L501.3 379.7L504.3 376.7" fill="none" stroke="#444" stroke-width="1.25" />
<text x="516" y="380.6" font-size="14" fill="#444" textLength="9.7" lengthAdjust="spacingAndGlyphs" >A</text>
<rect x="512.9" y="381.8" width="16.1" height="4.2" fill="#e60000" />
<path d="M535.2 376.7L538.2 379.7L541.2 376.7" fill="none" stroke="#444" stroke-width="1.25" />
<path d="M552.4 375.3L557.6 370.2L561.4 374L556.2 379.1Z" fill="#fff" stroke="#333" stroke-width="1.1" />
<path d="M556.1 372.3V370a1.5 1.5 0 0 1 3 0V374" fill="none" stroke="#333" stroke-width="1.1" />
<path d="M561.1 371.4c1.5 0.3 2.4 2 2.1 4.5l-0.2 3" fill="none" stroke="#1e6fc2" stroke-width="1.5" />
<rect x="550.5" y="382.5" width="15" height="3" fill="#fff" stroke="#777" stroke-width="1" />
<path d="M572.2 376.7L575.2 379.7L578.2 376.7" fill="none" stroke="#444" stroke-width="1.25" />
<rect x="583.9" y="365.9" width="36.8" height="23.7" fill="#c8c6c4" />
<rect x="587" y="370.3" width="15" height="13.5" fill="#fafafa" stroke="#e6e6e6" stroke-width="0.8" stroke-dasharray="2 1"/>
<line x1="594.5" y1="371" x2="594.5" y2="383.5" stroke="#b8b8b8" stroke-width="1" stroke-dasharray="2 1.5"/>
<line x1="587.5" y1="377.5" x2="601.5" y2="377.5" stroke="#b8b8b8" stroke-width="1" stroke-dasharray="2 1.5"/>
<line x1="586.9" y1="384.5" x2="602.2" y2="384.5" stroke="#262626" stroke-width="1.3" />
<path d="M609.3 376.7L612.3 379.7L615.3 376.7" fill="none" stroke="#444" stroke-width="1.25" />
<g transform="translate(526.1 220)">
<path d="M98.6 157.6L104.3 155.3L109.5 160.3L104.6 164.3Z" fill="#fff" stroke="#ed8b2c" stroke-width="1.2" stroke-linejoin="round"/>
<path d="M101.5 160.3L107 161.8L104.6 164.3Z" fill="#fbd38c" />
<path d="M104.3 155.6L108.3 151.6L112.2 155.5L108.3 159.5Z" fill="#fff" stroke="#262626" stroke-width="1.2" />
<path d="M110.2 153.6L113.7 150.1" fill="none" stroke="#262626" stroke-width="2.6" stroke-linecap="round"/>
<path d="M110.4 153.4L113.5 150.3" fill="none" stroke="#fff" stroke-width="0.8" />
</g>
<rect x="657.5" y="342.5" width="21" height="18" fill="#fff" stroke="#444" stroke-width="1.1" />
<rect x="658" y="348.5" width="20.3" height="6" fill="#7ab8ea" />
<line x1="657.5" y1="348.5" x2="678.5" y2="348.5" stroke="#444" stroke-width="1" />
<line x1="657.5" y1="354.5" x2="678.5" y2="354.5" stroke="#1e6fc2" stroke-width="1" />
<line x1="664.5" y1="342.5" x2="664.5" y2="348.5" stroke="#444" stroke-width="1" />
<line x1="671.5" y1="342.5" x2="671.5" y2="348.5" stroke="#444" stroke-width="1" />
<rect x="662" y="355" width="10" height="8" fill="#fff" />
<path d="M667 349v13.5M663 358.5l4 4 4-4" fill="none" stroke="#444" stroke-width="1.1" />
<path d="M682.2 350.75L684.7 353.25L687.2 350.75" fill="none" stroke="#444" stroke-width="1.25" />
<text x="648.8" y="380.5" font-size="12.3" fill="#262626" textLength="38.5" lengthAdjust="spacingAndGlyphs" >Вставка</text>
<rect x="707.5" y="342.5" width="21" height="18" fill="#fff" stroke="#444" stroke-width="1.1" />
<line x1="714.5" y1="342.5" x2="714.5" y2="360.5" stroke="#444" stroke-width="1" />
<line x1="721.5" y1="342.5" x2="721.5" y2="360.5" stroke="#444" stroke-width="1" />
<line x1="707.5" y1="348.5" x2="728.5" y2="348.5" stroke="#444" stroke-width="1" />
<line x1="707.5" y1="354.5" x2="728.5" y2="354.5" stroke="#444" stroke-width="1" />
<rect x="717" y="351" width="12" height="11" fill="#fff" />
<path d="M719.5 352.5l10.5 10.5M730 352.5l-10.5 10.5" fill="none" stroke="#e8484a" stroke-width="1.3" />
<path d="M732.0 350.75L734.5 353.25L737.0 350.75" fill="none" stroke="#444" stroke-width="1.25" />
<text x="697.3" y="380.5" font-size="12.3" fill="#262626" textLength="41" lengthAdjust="spacingAndGlyphs" >Удалить</text>
<text x="39.6" y="870" font-size="11.5" fill="#444" textLength="83" lengthAdjust="spacingAndGlyphs" >Страница 1 из 1</text>
<text x="143.3" y="870" font-size="11.5" fill="#444" textLength="76" lengthAdjust="spacingAndGlyphs" >Число слов: 25</text>
<path d="M246 863.2L239.5 861.2V871L246 873Z" fill="none" stroke="#444" stroke-width="1.1" />
<path d="M246 863.2L252.5 861.2V864.5M246 873L248.5 872" fill="none" stroke="#444" stroke-width="1.1" />
<path d="M247.3 867.8l2.2 2.4 3.6-5.2" fill="none" stroke="#444" stroke-width="1.1" />
<text x="271.3" y="870" font-size="11.5" fill="#444" textLength="41.3" lengthAdjust="spacingAndGlyphs" >русский</text>
<rect x="333.5" y="861.5" width="11.5" height="11" fill="#f3f2f1" stroke="#444" stroke-width="1.1" />
<rect x="333.5" y="861.5" width="11.5" height="3" fill="#444" />
<circle cx="335.3" cy="863.2" r="2.9" fill="#444"/>
<rect x="335.5" y="866.8" width="1.6" height="1.4" fill="#444" />
<rect x="338.3" y="866.8" width="1.6" height="1.4" fill="#444" />
<rect x="341.1" y="866.8" width="1.6" height="1.4" fill="#444" />
<rect x="335.5" y="869.8" width="1.6" height="1.4" fill="#444" />
<rect x="338.3" y="869.8" width="1.6" height="1.4" fill="#444" />
<rect x="341.1" y="869.8" width="1.6" height="1.4" fill="#444" />
<rect x="765.5" y="860.5" width="12" height="11" fill="none" stroke="#444" stroke-width="1" />
<line x1="771.5" y1="860.5" x2="771.5" y2="872" stroke="#444" stroke-width="1" />
<line x1="767" y1="863.5" x2="770" y2="863.5" stroke="#444" stroke-width="0.8" />
<line x1="773" y1="863.5" x2="776.5" y2="863.5" stroke="#444" stroke-width="0.8" />
<line x1="767" y1="865.5" x2="770" y2="865.5" stroke="#444" stroke-width="0.8" />
<line x1="773" y1="865.5" x2="776.5" y2="865.5" stroke="#444" stroke-width="0.8" />
<line x1="767" y1="868.5" x2="770" y2="868.5" stroke="#444" stroke-width="0.8" />
<line x1="773" y1="868.5" x2="776.5" y2="868.5" stroke="#444" stroke-width="0.8" />
<rect x="791" y="857" width="37.6" height="21" fill="#c8c6c4" />
<rect x="803" y="860.5" width="13.8" height="11.5" fill="none" stroke="#444" stroke-width="1" />
<line x1="805" y1="863.5" x2="815" y2="863.5" stroke="#444" stroke-width="0.8" />
<line x1="805" y1="865.5" x2="815" y2="865.5" stroke="#444" stroke-width="0.8" />
<line x1="805" y1="868.5" x2="815" y2="868.5" stroke="#444" stroke-width="0.8" />
<line x1="805" y1="870.5" x2="815" y2="870.5" stroke="#444" stroke-width="0.8" />
<path d="M841.5 872v-11.5h11v5" fill="none" stroke="#444" stroke-width="1" />
<line x1="843.5" y1="863.5" x2="850" y2="863.5" stroke="#444" stroke-width="0.8" />
<line x1="843.5" y1="865.5" x2="850" y2="865.5" stroke="#444" stroke-width="0.8" />
<line x1="843.5" y1="868.5" x2="850" y2="868.5" stroke="#444" stroke-width="0.8" />
<circle cx="851.5" cy="869.5" r="3.8" fill="#f3f2f1" stroke="#444" stroke-width="1"/>
<line x1="849" y1="869.5" x2="854" y2="869.5" stroke="#444" stroke-width="0.7" />
<line x1="851.5" y1="866" x2="851.5" y2="873" stroke="#444" stroke-width="0.7" />
<line x1="872" y1="867.5" x2="878.2" y2="867.5" stroke="#444" stroke-width="1.6" />
<line x1="882.3" y1="867.5" x2="981.5" y2="867.5" stroke="#a19f9d" stroke-width="1" />
<rect x="932" y="861.3" width="5.3" height="10.3" fill="#605e5c" />
<line x1="985.6" y1="867.5" x2="992.7" y2="867.5" stroke="#444" stroke-width="1.6" />
<line x1="989.15" y1="864" x2="989.15" y2="871" stroke="#444" stroke-width="1.6" />
<text x="1004.2" y="870" font-size="11.5" fill="#444" textLength="29.5" lengthAdjust="spacingAndGlyphs" >120 %</text>
<rect x="403.5" y="411.5" width="215.0" height="467.3" fill="#fff" stroke="#c8c6c4" stroke-width="1" filter="url(#ds)"/>
<text x="442.5" y="431.4" font-size="12.5" fill="#a6a6a6" textLength="50.2" lengthAdjust="spacingAndGlyphs" >Вырезать</text>
<line x1="449.2" y1="433.5" x2="458.4" y2="433.5" stroke="#a6a6a6" stroke-width="1" />
<path d="M420.5 418.5l7.5 11M428.8 418.5l-7.5 11" fill="none" stroke="#a6a6a6" stroke-width="1" />
<circle cx="421.5" cy="431.3" r="1.9" fill="none" stroke="#a6a6a6" stroke-width="1"/>
<circle cx="428" cy="431.3" r="1.9" fill="none" stroke="#a6a6a6" stroke-width="1"/>
<text x="442.5" y="459.1" font-size="12.5" fill="#a6a6a6" textLength="64.7" lengthAdjust="spacingAndGlyphs" >Копировать</text>
<line x1="442.2" y1="460.5" x2="448.9" y2="460.5" stroke="#a6a6a6" stroke-width="1" />
<path d="M424 459h-6.5v-12h5.5l2 2" fill="none" stroke="#a6a6a6" stroke-width="1" />
<path d="M423.3 449.5h6l3.2 3.2v8.3h-9.2z" fill="#fff" stroke="#a6a6a6" stroke-width="1" />
<line x1="425.5" y1="455.5" x2="430.5" y2="455.5" stroke="#a6a6a6" stroke-width="0.9" />
<line x1="425.5" y1="457.5" x2="430.5" y2="457.5" stroke="#a6a6a6" stroke-width="0.9" />
<path d="M424 476.5h-4.5v12.5h6" fill="none" stroke="#ed8b2c" stroke-width="1.3" />
<path d="M428 476.5h2.5v4" fill="none" stroke="#ed8b2c" stroke-width="1.3" />
<path d="M422.5 479v-3h2.3a1.6 1.6 0 0 1 3.2 0h2.3v3z" fill="#fff" stroke="#605e5c" stroke-width="1" />
<rect x="426.3" y="482.3" width="6.5" height="7.5" fill="#fff" stroke="#262626" stroke-width="1.1" />
<text x="443.3" y="489" font-size="12.5" fill="#262626" font-weight="bold" textLength="118" lengthAdjust="spacingAndGlyphs" >Параметры вставки:</text>
<path d="M446.5 507h-1.8v18h6.5" fill="none" stroke="#ed8b2c" stroke-width="1.4" />
<path d="M456.5 507h2.3v7" fill="none" stroke="#ed8b2c" stroke-width="1.4" />
<path d="M447.8 510v-3.8h3a1.9 1.9 0 0 1 3.8 0h3v3.8z" fill="#fff" stroke="#605e5c" stroke-width="1" />
<text x="453.5" y="525.6" font-size="13" fill="#444" textLength="9.5" lengthAdjust="spacingAndGlyphs" >A</text>
<line x1="437" y1="533.5" x2="617" y2="533.5" stroke="#e1dfdd" stroke-width="1" />
<circle cx="427.3" cy="546.3" r="5" fill="none" stroke="#1e7fd4" stroke-width="1.2"/>
<line x1="423.8" y1="549.8" x2="417.8" y2="555.5" stroke="#1e7fd4" stroke-width="1.4" />
<line x1="427.5" y1="545.5" x2="427.5" y2="549" stroke="#1e7fd4" stroke-width="1.1" />
<rect x="426.7" y="542.8" width="1.2" height="1.2" fill="#1e7fd4" />
<text x="442.5" y="552.9" font-size="12.5" fill="#262626" textLength="141.8" lengthAdjust="spacingAndGlyphs" >Интеллектуальный поиск</text>
<line x1="442.1" y1="554.5" x2="450.9" y2="554.5" stroke="#262626" stroke-width="1" />
<text x="442.5" y="581.4" font-size="12.5" fill="#262626" textLength="60.2" lengthAdjust="spacingAndGlyphs" >Синонимы</text>
<line x1="485.2" y1="582.5" x2="494" y2="582.5" stroke="#262626" stroke-width="1" />
<path d="M603.8 571l5 4.5-5 4.5" fill="none" stroke="#444" stroke-width="1.1" />
<text x="416.6" y="611.9" font-size="10.5" fill="#1e7fd4" textLength="6.6" lengthAdjust="spacingAndGlyphs" >a</text>
<path d="M417 597.2L423.7 598.6L421.2 600.2L423.4 602.7H417Z" fill="#1e6fc2" />
<path d="M425.3 598.2h6M427.8 596.3c0 3 0.4 5.5 1.6 8.3M431.3 600c-1.3 2.5-3.3 4.6-4.8 4.1c-1.2-0.5-0.6-3 2.6-3.5c2.5-0.4 4 1 3.5 2.6c-0.3 0.9-1.2 1.4-2 1.7" fill="none" stroke="#188038" stroke-width="1.1" />
<path d="M433 611.9L426.2 610.4L428.6 608.7L426.4 605.9L433 605.7Z" fill="#188038" />
<text x="442.5" y="608.7" font-size="12.5" fill="#262626" textLength="57.3" lengthAdjust="spacingAndGlyphs" >Перевести</text>
<line x1="442.3" y1="610.5" x2="450.8" y2="610.5" stroke="#262626" stroke-width="1" />
<line x1="437" y1="620.5" x2="617" y2="620.5" stroke="#e1dfdd" stroke-width="1" />
<rect x="404.5" y="622" width="213.5" height="28" fill="#d2d0ce" />
<text x="442.5" y="640" font-size="12.5" fill="#262626" textLength="49" lengthAdjust="spacingAndGlyphs" >Вставить</text>
<line x1="442.2" y1="641.5" x2="448.9" y2="641.5" stroke="#262626" stroke-width="1" />
<path d="M603.8 629.9l5 4.5-5 4.5" fill="none" stroke="#444" stroke-width="1.1" />
<text x="442.5" y="667.7" font-size="12.5" fill="#262626" textLength="94.3" lengthAdjust="spacingAndGlyphs" >Удалить ячейки...</text>
<line x1="442.2" y1="668.5" x2="450" y2="668.5" stroke="#262626" stroke-width="1" />
<rect x="417.5" y="683.5" width="14.5" height="14" fill="#fff" stroke="#444" stroke-width="1.1" />
<line x1="417.5" y1="688.5" x2="432" y2="688.5" stroke="#1e7fd4" stroke-width="1.1" />
<line x1="417.5" y1="692.5" x2="432" y2="692.5" stroke="#1e7fd4" stroke-width="1.1" />
<line x1="422.5" y1="683.5" x2="422.5" y2="697.5" stroke="#444" stroke-width="1" />
<line x1="427.5" y1="683.5" x2="427.5" y2="697.5" stroke="#444" stroke-width="1" />
<rect x="418" y="689" width="13.5" height="3.3" fill="#fff" />
<rect x="419" y="690" width="1" height="1.2" fill="#1e7fd4" />
<rect x="421" y="690" width="1" height="1.2" fill="#1e7fd4" />
<rect x="423" y="690" width="1" height="1.2" fill="#1e7fd4" />
<rect x="425" y="690" width="1" height="1.2" fill="#1e7fd4" />
<rect x="427" y="690" width="1" height="1.2" fill="#1e7fd4" />
<rect x="429" y="690" width="1" height="1.2" fill="#1e7fd4" />
<text x="442.5" y="696" font-size="12.5" fill="#262626" textLength="105" lengthAdjust="spacingAndGlyphs" >Разделить ячейки...</text>
<line x1="454.8" y1="697.5" x2="462.1" y2="697.5" stroke="#262626" stroke-width="1" />
<line x1="437" y1="707.5" x2="617" y2="707.5" stroke="#e1dfdd" stroke-width="1" />
<text x="442.5" y="727.1" font-size="12.5" fill="#262626" textLength="150.5" lengthAdjust="spacingAndGlyphs" >Стили оформления границ</text>
<line x1="442.2" y1="729.5" x2="450" y2="729.5" stroke="#262626" stroke-width="1" />
<line x1="594.5" y1="716.5" x2="594.5" y2="729" stroke="#e1dfdd" stroke-width="1" />
<path d="M603.8 718l5 4.5-5 4.5" fill="none" stroke="#444" stroke-width="1.1" />
<path d="M420.6 742.5v14.5M418.2 754.5l2.4 2.5 2.4-2.5M428.6 750.5v6.5M426.2 754.5l2.4 2.5 2.4-2.5" fill="none" stroke="#444" stroke-width="1" />
<text x="425.5" y="749" font-size="9" fill="#1e7fd4" textLength="6.3" lengthAdjust="spacingAndGlyphs" >A</text>
<text x="442.5" y="754.8" font-size="12.5" fill="#262626" textLength="120" lengthAdjust="spacingAndGlyphs" >Направление текста...</text>
<line x1="442.2" y1="755.5" x2="451" y2="755.5" stroke="#262626" stroke-width="1" />
<rect x="417.5" y="770.5" width="15.5" height="15" fill="#fff" stroke="#444" stroke-width="1" />
<rect x="417.5" y="770.5" width="15.5" height="2.6" fill="#8a8886" />
<line x1="422.5" y1="773" x2="422.5" y2="786" stroke="#444" stroke-width="1" />
<line x1="417.5" y1="777.5" x2="433" y2="777.5" stroke="#444" stroke-width="0.8" />
<line x1="417.5" y1="781.5" x2="422.5" y2="781.5" stroke="#444" stroke-width="0.8" />
<line x1="428.5" y1="773" x2="428.5" y2="776" stroke="#444" stroke-width="0.8" />
<rect x="424.5" y="778.5" width="8" height="6.5" fill="#fff" stroke="#444" stroke-width="0.9" />
<rect x="426.3" y="780" width="1.5" height="1.5" fill="#1e7fd4" />
<rect x="429.3" y="780" width="1.5" height="1.5" fill="#1e7fd4" />
<rect x="426.3" y="782.8" width="1.5" height="1.5" fill="#1e7fd4" />
<rect x="429.3" y="782.8" width="1.5" height="1.5" fill="#1e7fd4" />
<text x="442.5" y="782.6" font-size="12.5" fill="#262626" textLength="111" lengthAdjust="spacingAndGlyphs" >Свойства таблицы...</text>
<line x1="442.2" y1="784.5" x2="450" y2="784.5" stroke="#262626" stroke-width="1" />
<line x1="437" y1="794.5" x2="617" y2="794.5" stroke="#e1dfdd" stroke-width="1" />
<circle cx="423.5" cy="806" r="4.6" fill="none" stroke="#444" stroke-width="1"/>
<path d="M417.8 816.8c0.3-3 2-5 4.5-6" fill="none" stroke="#444" stroke-width="1" />
<circle cx="428.6" cy="812.7" r="4.4" fill="#fff" stroke="#e8484a" stroke-width="1.3"/>
<line x1="425.6" y1="809.7" x2="431.6" y2="815.7" stroke="#e8484a" stroke-width="1.3" />
<text x="442.5" y="814.3" font-size="12.5" fill="#262626" textLength="117.5" lengthAdjust="spacingAndGlyphs" >Блокировать авторов</text>
<line x1="442.2" y1="815.5" x2="448.3" y2="815.5" stroke="#262626" stroke-width="1" />
<line x1="437" y1="825.5" x2="617" y2="825.5" stroke="#e1dfdd" stroke-width="1" />
<ellipse cx="422.8" cy="838.3" rx="5.3" ry="3.3" fill="none" stroke="#444" stroke-width="1.1"/>
<ellipse cx="427.3" cy="841.5" rx="5.3" ry="3.3" fill="none" stroke="#444" stroke-width="1.1"/>
<text x="442.5" y="844.6" font-size="12.5" fill="#262626" textLength="42.3" lengthAdjust="spacingAndGlyphs" >Ссылка</text>
<line x1="456.3" y1="846.5" x2="464.9" y2="846.5" stroke="#262626" stroke-width="1" />
<line x1="594.5" y1="834" x2="594.5" y2="847" stroke="#e1dfdd" stroke-width="1" />
<path d="M603.8 836.5l5 4.5-5 4.5" fill="none" stroke="#444" stroke-width="1.1" />
<path d="M422 862.5h9.5v8h-6l-3 3v-3h-0.5z" fill="#fff" stroke="#444" stroke-width="1" />
<path d="M420 859.5v6M417 862.5h6" fill="none" stroke="#1a9a3a" stroke-width="1.1" />
<text x="442.5" y="872.9" font-size="12.5" fill="#262626" textLength="114.5" lengthAdjust="spacingAndGlyphs" >Создать примечание</text>
<line x1="537.6" y1="874.5" x2="543.8" y2="874.5" stroke="#262626" stroke-width="1" />
<rect x="617.5" y="622.5" width="203.0" height="142.5" fill="#fff" stroke="#c8c6c4" stroke-width="1" filter="url(#ds)"/>
<rect x="618.5" y="680" width="201.5" height="27.5" fill="#d2d0ce" />
<text x="656.5" y="641.7" font-size="12.5" fill="#262626" textLength="131.7" lengthAdjust="spacingAndGlyphs" >Вставить столбцы слева</text>
<line x1="771.8" y1="643.5" x2="777.2" y2="643.5" stroke="#262626" stroke-width="1" />
<rect x="631.5" y="630.5" width="15" height="13" fill="#fff" />
<rect x="636.5" y="630.5" width="5" height="13" fill="#7ab8ea" />
<line x1="636.5" y1="630.5" x2="636.5" y2="643.5" stroke="#1e6fc2" stroke-width="1.1" />
<line x1="641.5" y1="630.5" x2="641.5" y2="643.5" stroke="#1e6fc2" stroke-width="1.1" />
<line x1="641.5" y1="634.5" x2="646.5" y2="634.5" stroke="#333" stroke-width="0.9" />
<line x1="641.5" y1="639.5" x2="646.5" y2="639.5" stroke="#333" stroke-width="0.9" />
<path d="M631.5 634.3V630.5H646.5V643.5H631.5V639.9" fill="none" stroke="#333" stroke-width="1.2" />
<rect x="632.3" y="635.4" width="6.5" height="3.4000000000000226" fill="#fff" />
<path d="M639.0 637.0999999999999H632.0M635.0 634.0999999999999l-3 3 3 3" fill="none" stroke="#333" stroke-width="1.1" />
<text x="656.5" y="669.8" font-size="12.5" fill="#262626" textLength="139" lengthAdjust="spacingAndGlyphs" >Вставить столбцы справа</text>
<line x1="768.1" y1="671.5" x2="774.7" y2="671.5" stroke="#262626" stroke-width="1" />
<rect x="631.5" y="658.5" width="15" height="13" fill="#fff" />
<rect x="636.5" y="658.5" width="5" height="13" fill="#7ab8ea" />
<line x1="636.5" y1="658.5" x2="636.5" y2="671.5" stroke="#1e6fc2" stroke-width="1.1" />
<line x1="641.5" y1="658.5" x2="641.5" y2="671.5" stroke="#1e6fc2" stroke-width="1.1" />
<line x1="631.5" y1="662.5" x2="636.5" y2="662.5" stroke="#333" stroke-width="0.9" />
<line x1="631.5" y1="667.5" x2="636.5" y2="667.5" stroke="#333" stroke-width="0.9" />
<path d="M646.5 662.3V658.5H631.5V671.5H646.5V667.9" fill="none" stroke="#333" stroke-width="1.2" />
<rect x="640.0" y="663.4" width="5.7" height="3.4000000000000226" fill="#fff" />
<path d="M639.0 665.0999999999999H646.0M643.0 662.0999999999999l3 3-3 3" fill="none" stroke="#333" stroke-width="1.1" />
<text x="656.5" y="697.4" font-size="12.5" fill="#262626" textLength="128.4" lengthAdjust="spacingAndGlyphs" >Вставить строки сверху</text>
<line x1="773.2" y1="698.5" x2="779.6" y2="698.5" stroke="#262626" stroke-width="1" />
<rect x="631.5" y="686.5" width="15" height="13" fill="#fff" />
<rect x="631.5" y="690.8" width="15" height="4.600000000000023" fill="#7ab8ea" />
<line x1="631.5" y1="690.5" x2="646.5" y2="690.5" stroke="#1e6fc2" stroke-width="1.1" />
<line x1="631.5" y1="695.5" x2="646.5" y2="695.5" stroke="#1e6fc2" stroke-width="1.1" />
<line x1="636.5" y1="695.4" x2="636.5" y2="699.5" stroke="#333" stroke-width="0.9" />
<line x1="641.5" y1="695.4" x2="641.5" y2="699.5" stroke="#333" stroke-width="0.9" />
<line x1="636.5" y1="686.5" x2="636.5" y2="690.3" stroke="#333" stroke-width="0.9" />
<line x1="641.5" y1="686.5" x2="641.5" y2="690.3" stroke="#333" stroke-width="0.9" />
<path d="M636.0 686.5H631.5V699.5H646.5V686.5H642.0" fill="none" stroke="#333" stroke-width="1.2" />
<rect x="635.9" y="685.9" width="6.2" height="4.2999999999999545" fill="#fff" />
<path d="M639 694.0999999999999V686.5M636.2 689.3l2.8-2.8 2.8 2.8" fill="none" stroke="#333" stroke-width="1.1" />
<text x="656.5" y="725.6" font-size="12.5" fill="#262626" textLength="122.4" lengthAdjust="spacingAndGlyphs" >Вставить строки снизу</text>
<line x1="656.2" y1="726.5" x2="663" y2="726.5" stroke="#262626" stroke-width="1" />
<rect x="631.5" y="714.5" width="15" height="13" fill="#fff" />
<rect x="631.5" y="718.8" width="15" height="4.600000000000023" fill="#7ab8ea" />
<line x1="631.5" y1="718.5" x2="646.5" y2="718.5" stroke="#1e6fc2" stroke-width="1.1" />
<line x1="631.5" y1="723.5" x2="646.5" y2="723.5" stroke="#1e6fc2" stroke-width="1.1" />
<line x1="636.5" y1="714.5" x2="636.5" y2="718.8" stroke="#333" stroke-width="0.9" />
<line x1="641.5" y1="714.5" x2="641.5" y2="718.8" stroke="#333" stroke-width="0.9" />
<line x1="636.5" y1="723.9" x2="636.5" y2="727.5" stroke="#333" stroke-width="0.9" />
<line x1="641.5" y1="723.9" x2="641.5" y2="727.5" stroke="#333" stroke-width="0.9" />
<path d="M636.0 727.5H631.5V714.5H646.5V727.5H642.0" fill="none" stroke="#333" stroke-width="1.2" />
<rect x="635.9" y="724.0" width="6.2" height="4.100000000000023" fill="#fff" />
<path d="M639 720.0999999999999V727.5M636.2 724.7l2.8 2.8 2.8-2.8" fill="none" stroke="#333" stroke-width="1.1" />
<text x="656.5" y="753.5" font-size="12.5" fill="#262626" textLength="98" lengthAdjust="spacingAndGlyphs" >Вставить ячейки...</text>
<line x1="656.2" y1="754.5" x2="663" y2="754.5" stroke="#262626" stroke-width="1" />
<rect x="631.5" y="742.5" width="15" height="13" fill="#fff" />
<rect x="636.5" y="746.8" width="10" height="4.600000000000023" fill="#7ab8ea" />
<line x1="636.5" y1="746.5" x2="646.5" y2="746.5" stroke="#1e6fc2" stroke-width="1.1" />
<line x1="636.5" y1="751.5" x2="646.5" y2="751.5" stroke="#1e6fc2" stroke-width="1.1" />
<line x1="641.5" y1="746.8" x2="641.5" y2="751.4" stroke="#1e6fc2" stroke-width="1.1" />
<line x1="636.5" y1="742.5" x2="636.5" y2="746.8" stroke="#333" stroke-width="0.9" />
<line x1="641.5" y1="742.5" x2="641.5" y2="746.8" stroke="#333" stroke-width="0.9" />
<line x1="636.5" y1="751.4" x2="636.5" y2="755.5" stroke="#333" stroke-width="0.9" />
<line x1="641.5" y1="751.4" x2="641.5" y2="755.5" stroke="#333" stroke-width="0.9" />
<path d="M631.5 746.3V742.5H646.5V755.5H631.5V751.9" fill="none" stroke="#333" stroke-width="1.2" />
<rect x="632.3" y="747.4" width="6.2" height="3.4000000000000226" fill="#fff" />
<path d="M638.5 749.0999999999999H632.0M635.0 746.0999999999999l-3 3 3 3" fill="none" stroke="#2b8ee0" stroke-width="1.3" />
<defs><filter id="blr" x="-5%" y="-20%" width="110%" height="140%"><feGaussianBlur stdDeviation="1.6"/></filter><clipPath id="rbc"><rect x="617" y="678.4" width="203" height="56.8" rx="7"/></clipPath></defs>
<g clip-path="url(#rbc)"><rect x="619.2" y="680.6" width="198.6" height="52.4" rx="6" fill="none" stroke="#000" stroke-opacity="0.35" stroke-width="3" filter="url(#blr)"/></g>
<rect x="615.5" y="677.6" width="209.3" height="59.9" rx="10" fill="none" stroke="#000" stroke-opacity="0.45" stroke-width="7" filter="url(#blr)"/>
<rect x="615.5" y="676.6" width="209.3" height="59.9" rx="10" fill="none" stroke="#fff" stroke-width="6"/>
<rect x="615.5" y="676.6" width="209.3" height="59.9" rx="10" fill="none" stroke="#f0000f" stroke-width="3.2"/>
</svg></body></html>
